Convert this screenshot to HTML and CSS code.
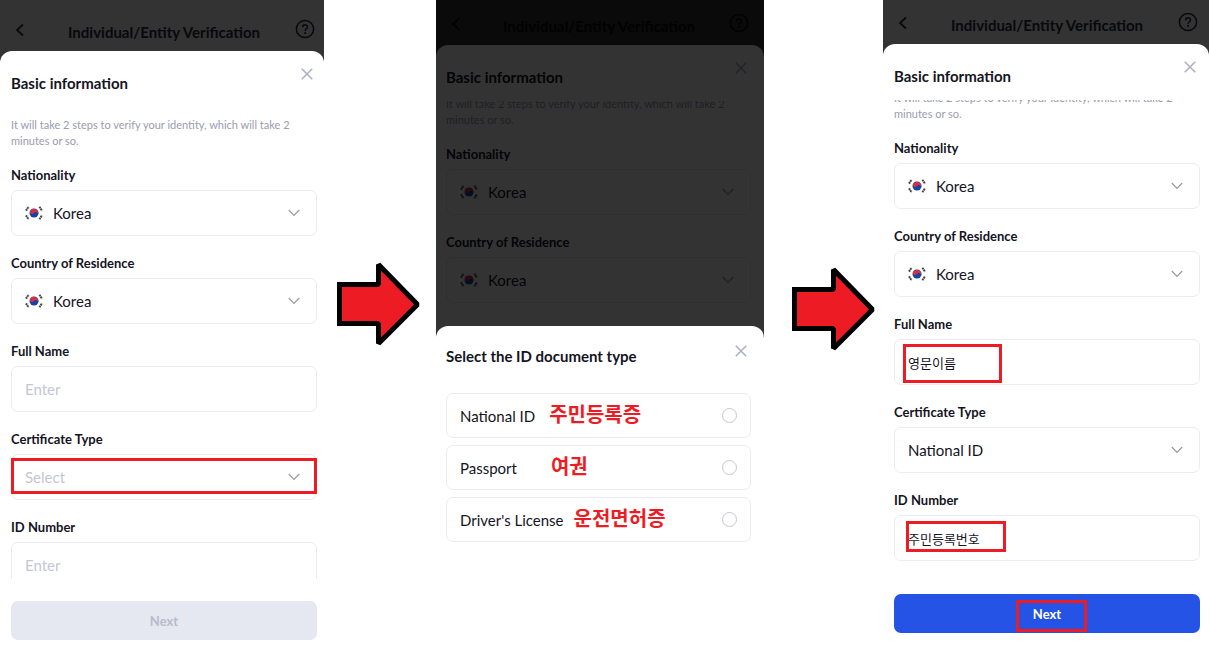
FILE: index.html
```html
<!DOCTYPE html>
<html lang="en">
<head>
<meta charset="utf-8">
<title>Individual/Entity Verification</title>
<link rel="stylesheet" href="styles.css">
</head>
<body>
<svg class="defs" aria-hidden="true">
  <symbol id="back" viewBox="0 0 10 14"><path d="M8 1.500 2 7l6 5.500" fill="none" stroke="currentColor" stroke-width="1.700"/></symbol>
  <symbol id="help" viewBox="0 0 20 20"><circle cx="10" cy="10" r="8.600" fill="none" stroke="currentColor" stroke-width="1.500"/><path d="M7.600 8.200C7.600 4.900 12.600 5 12.500 8c0 1.700-2.400 1.800-2.400 3.700" fill="none" stroke="currentColor" stroke-width="1.500"/><circle cx="10.100" cy="14" r="1" fill="currentColor"/></symbol>
  <symbol id="close" viewBox="0 0 12 12"><path d="m.8.800 10.400 10.400M11.200.8.800 11.200" fill="none" stroke="currentColor" stroke-width="1.600"/></symbol>
  <symbol id="chevron" viewBox="0 0 12 8"><path d="m.8 1 5.200 5.300L11.200 1" fill="none" stroke="currentColor" stroke-width="1.200"/></symbol>
  <symbol id="flag" viewBox="0 0 18 14">
    <g stroke="#444" stroke-width="2" stroke-dasharray="1.800 .4"><path d="M1 4.600 3.600.8M14.400.8 17 4.600M1 9.400l2.600 3.800M14.400 13.200 17 9.400"/></g>
    <circle cx="9" cy="7" r="4.500" fill="#1046a8"/>
    <path d="M5.100 4.800A4.500 4.500 0 0 1 12.900 9.200 2.250 2.250 0 0 0 9 7 2.250 2.250 0 0 1 5.100 4.800Z" fill="#d8303c"/>
  </symbol>
  <symbol id="arrow" viewBox="0 0 84 84"><path d="M2.500 22.500h39v-20l39 40-39 39v-20h-39Z" fill="#ed1c24" stroke="#000" stroke-width="5" stroke-linejoin="bevel"/><path d="M0 20h5v5H0zM0 59h5v5H0z"/></symbol>
</svg>
<main class="guide">
  <section class="phone phone-start">
    <header class="topbar">
      <button class="icon-btn" aria-label="Back"><svg class="i-back"><use href="#back"/></svg></button>
      <h1>Individual/Entity Verification</h1>
      <button class="icon-btn" aria-label="Help"><svg class="i-help"><use href="#help"/></svg></button>
    </header>
    <form class="sheet">
      <div class="sheet-head"><h2>Basic information</h2><button type="button" class="icon-btn close" aria-label="Close"><svg class="i-close"><use href="#close"/></svg></button></div>
      <div class="scroll"><div class="content">
        <p>It will take 2 steps to verify your identity, which will take 2 minutes or so.</p>
        <div class="field"><label for="a1">Nationality</label><div class="box"><svg class="i-flag"><use href="#flag"/></svg><select id="a1"><option>Korea</option></select><svg class="i-chevron"><use href="#chevron"/></svg></div></div>
        <div class="field"><label for="a2">Country of Residence</label><div class="box"><svg class="i-flag"><use href="#flag"/></svg><select id="a2"><option>Korea</option></select><svg class="i-chevron"><use href="#chevron"/></svg></div></div>
        <div class="field"><label for="a3">Full Name</label><div class="box"><input id="a3" type="text" placeholder="Enter"></div></div>
        <div class="field"><label for="a4">Certificate Type</label><div class="box mark mark-type"><select id="a4" class="empty"><option>Select</option></select><svg class="i-chevron"><use href="#chevron"/></svg></div></div>
        <div class="field"><label for="a5">ID Number</label><div class="box"><input id="a5" type="text" placeholder="Enter"></div></div>
      </div></div>
      <button type="button" class="next" disabled>Next</button>
    </form>
  </section>

  <div class="step step-one"><svg class="i-arrow"><use href="#arrow"/></svg></div>

  <section class="phone phone-type">
    <header class="topbar">
      <button class="icon-btn" aria-label="Back"><svg class="i-back"><use href="#back"/></svg></button>
      <h1>Individual/Entity Verification</h1>
      <button class="icon-btn" aria-label="Help"><svg class="i-help"><use href="#help"/></svg></button>
    </header>
    <form class="sheet">
      <div class="sheet-head"><h2>Basic information</h2><button type="button" class="icon-btn close" aria-label="Close"><svg class="i-close"><use href="#close"/></svg></button></div>
      <div class="scroll"><div class="content">
        <p>It will take 2 steps to verify your identity, which will take 2 minutes or so.</p>
        <div class="field"><label for="b1">Nationality</label><div class="box"><svg class="i-flag"><use href="#flag"/></svg><select id="b1"><option>Korea</option></select><svg class="i-chevron"><use href="#chevron"/></svg></div></div>
        <div class="field"><label for="b2">Country of Residence</label><div class="box"><svg class="i-flag"><use href="#flag"/></svg><select id="b2"><option>Korea</option></select><svg class="i-chevron"><use href="#chevron"/></svg></div></div>
      </div></div>
    </form>
    <div class="backdrop">
      <form class="picker">
        <div class="sheet-head"><h2>Select the ID document type</h2><button type="button" class="icon-btn close" aria-label="Close"><svg class="i-close"><use href="#close"/></svg></button></div>
        <div class="options">
          <label class="option"><span>National ID</span><strong class="note note-id" lang="ko">주민등록증</strong><input type="radio" name="doc"></label>
          <label class="option"><span>Passport</span><strong class="note note-passport" lang="ko">여권</strong><input type="radio" name="doc"></label>
          <label class="option"><span>Driver's License</span><strong class="note note-license" lang="ko">운전면허증</strong><input type="radio" name="doc"></label>
        </div>
      </form>
    </div>
  </section>

  <div class="step step-two"><svg class="i-arrow"><use href="#arrow"/></svg></div>

  <section class="phone phone-filled">
    <header class="topbar">
      <button class="icon-btn" aria-label="Back"><svg class="i-back"><use href="#back"/></svg></button>
      <h1>Individual/Entity Verification</h1>
      <button class="icon-btn" aria-label="Help"><svg class="i-help"><use href="#help"/></svg></button>
    </header>
    <form class="sheet">
      <div class="sheet-head"><h2>Basic information</h2><button type="button" class="icon-btn close" aria-label="Close"><svg class="i-close"><use href="#close"/></svg></button></div>
      <div class="scroll"><div class="content">
        <p>It will take 2 steps to verify your identity, which will take 2 minutes or so.</p>
        <div class="field"><label for="c1">Nationality</label><div class="box"><svg class="i-flag"><use href="#flag"/></svg><select id="c1"><option>Korea</option></select><svg class="i-chevron"><use href="#chevron"/></svg></div></div>
        <div class="field"><label for="c2">Country of Residence</label><div class="box"><svg class="i-flag"><use href="#flag"/></svg><select id="c2"><option>Korea</option></select><svg class="i-chevron"><use href="#chevron"/></svg></div></div>
        <div class="field"><label for="c3">Full Name</label><div class="box mark mark-name"><input id="c3" type="text" lang="ko" class="korean" value="영문이름"></div></div>
        <div class="field"><label for="c4">Certificate Type</label><div class="box"><select id="c4"><option>National ID</option></select><svg class="i-chevron"><use href="#chevron"/></svg></div></div>
        <div class="field"><label for="c5">ID Number</label><div class="box mark mark-number"><input id="c5" type="text" lang="ko" class="korean" value="주민등록번호"></div></div>
      </div></div>
      <button type="button" class="next mark mark-next">Next</button>
    </form>
  </section>
</main>
</body>
</html>
```

FILE: styles.css
```css
*, *::after { box-sizing: border-box; }

body {
  margin: 0;
  background: #fff;
  color: #14141f;
  font-family: Lato, "Noto Sans CJK KR", sans-serif;
  font-size: 15px;
}

h1, h2, p { margin: 0; }

button, input, select { font: inherit; color: inherit; }

.defs { position: absolute; width: 0; height: 0; }

.guide {
  display: grid;
  grid-template-columns: 324fr 112px 328fr 119px 326fr;
  height: 100vh;
  overflow: hidden;
}

.phone {
  position: relative;
  display: flex;
  flex-direction: column;
  min-width: 0;
  min-height: 0;
  background: #333;
}

.phone-start { --bar: 51px; --left: 11px; --right: 7px; --bottom: 28px; --scrolled: 0px; }
.phone-type { --bar: 45px; --left: 10px; --right: 13px; --bottom: 0px; --scrolled: -15px; }
.phone-filled { --bar: 44px; --left: 11px; --right: 9px; --bottom: 35px; --scrolled: -20px; }

.topbar {
  flex: none;
  display: flex;
  align-items: flex-end;
  height: var(--bar);
  padding: 0 calc(var(--right) + 2px) 9px 15px;
  color: #08080d;
}

.topbar h1 {
  flex: 1;
  padding-left: 8px;
  text-align: center;
  font-size: 15px;
  line-height: 20px;
  font-weight: 700;
}

.icon-btn {
  display: flex;
  padding: 0;
  border: 0;
  background: none;
}

.i-back { width: 10px; height: 14px; margin-bottom: 5px; }
.i-help { width: 20px; height: 20px; margin-bottom: 3px; }
.i-close { width: 12px; height: 12px; }
.i-chevron { flex: none; width: 12px; height: 8px; color: #999; pointer-events: none; }
.i-flag { flex: none; width: 18px; height: 14px; margin-right: 10px; }
.i-arrow { display: block; width: 84px; height: 84px; }

.sheet, .picker {
  background: #fff;
  border-radius: 12px 12px 0 0;
  padding: 0 var(--right) var(--bottom) var(--left);
}

.sheet {
  flex: 1;
  display: flex;
  flex-direction: column;
  min-height: 0;
}

.sheet-head {
  flex: none;
  display: flex;
  align-items: flex-start;
  justify-content: space-between;
  height: 56px;
  padding: 17px 4px 0 0;
}

.sheet-head h2 { padding-top: 5px; font-size: 15px; line-height: 20px; font-weight: 700; }

.close { color: #adb1c4; }

.scroll { flex: 1; min-height: 0; overflow: hidden; }

.content { margin-top: var(--scrolled); padding-top: 10px; }

.content p {
  padding-right: 16px;
  margin-bottom: 16px;
  font-size: 11px;
  line-height: 16px;
  color: #9a9cb0;
}

.field { margin-bottom: 17px; }

.field label {
  display: block;
  margin-bottom: 5px;
  font-size: 13px;
  line-height: 20px;
  font-weight: 700;
}

.box {
  position: relative;
  display: flex;
  align-items: center;
  height: 46px;
  padding: 0 16px 0 13px;
  border: 1px solid #ebebf4;
  border-radius: 7px;
}

.box input, .box select {
  flex: 1;
  min-width: 0;
  padding: 0;
  border: 0;
  outline: 0;
  background: none;
  appearance: none;
}

.box ::placeholder { color: #c4c6d4; opacity: 1; }
.box .empty { color: #c4c6d4; }
.box .korean { font-size: 13px; font-family: "Noto Sans CJK KR", sans-serif; }

.next {
  flex: none;
  position: relative;
  height: 39px;
  margin-top: 22px;
  border: 0;
  border-radius: 7px;
  background: #2453e6;
  color: #fff;
  font-size: 13px;
  font-weight: 700;
}

.next:disabled { background: #e5e7f1; color: #b8bbcb; }

/* Red frames drawn over the controls being explained */
.mark::after {
  content: "";
  position: absolute;
  border: 3px solid #ed1c24;
  pointer-events: none;
}

.mark-type::after { inset: 3px -1px 5px -1px; }
.mark-name::after { left: 8px; top: 4px; width: 99px; height: 39px; }
.mark-number::after { left: 11px; top: 5px; width: 100px; height: 31px; }
.mark-next::after { left: 40%; top: 6px; width: 71px; height: 32px; }

.backdrop {
  position: absolute;
  inset: 0;
  display: flex;
  flex-direction: column;
  justify-content: flex-end;
  background: rgba(0, 0, 0, .8);
}

.picker { padding-bottom: 126px; }
.picker .sheet-head { height: 67px; padding-top: 19px; }
.picker .sheet-head h2 { padding-top: 1px; }

.options { display: flex; flex-direction: column; gap: 7px; }

.option {
  display: flex;
  align-items: center;
  height: 45px;
  padding: 0 13px;
  border: 1px solid #ebebf4;
  border-radius: 7px;
}

.option input {
  width: 15px;
  height: 15px;
  margin: 0 0 0 auto;
  border: 1px solid #c6c7d1;
  border-radius: 50%;
  appearance: none;
}

.note {
  padding-bottom: 4px;
  color: #ed1c24;
  font: 700 20px/24px "Noto Sans CJK KR", sans-serif;
}

.note-id { margin-left: 14px; }
.note-passport { margin-left: 34px; }
.note-license { margin-left: 10px; }

.step-one { padding: 262px 0 0 13px; }
.step-two { padding: 267px 0 0 28px; }
```
